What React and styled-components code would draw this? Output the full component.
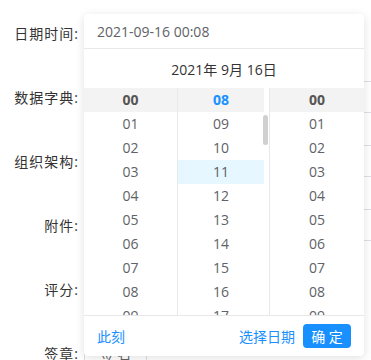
import React from "react";
import styled, { createGlobalStyle } from "styled-components";

const GlobalStyle = createGlobalStyle`
  html, body {
    margin: 0;
    padding: 0;
    background: #fff;
    overflow: hidden;
  }
  body {
    font-family: "Open Sans", "Noto Sans CJK SC", sans-serif;
    font-size: 14px;
    color: #606266;
  }
`;

const pad = (n) => String(n).padStart(2, "0");

// field rows behind the picker
const Page = styled.div`
  position: relative;
  width: 420px;
  height: 360px;
  padding-top: 17px;
  box-sizing: border-box;
`;

const Form = styled.div`
  display: flex;
  flex-direction: column;
  gap: 32px;
`;

const Row = styled.div`
  display: grid;
  grid-template-columns: 84px 1fr;
  height: 32px;
`;

const Label = styled.label`
  text-align: right;
  padding-right: 5px;
  line-height: 33px;
  color: #333;
  font-size: 14px;
  letter-spacing: 1px;
`;

const Field = styled.div`
  height: 32px;
  box-sizing: border-box;
  border: 1px solid #dcdfe6;
  border-radius: 4px;
  width: ${(p) => p.$width || "auto"};
`;

const SignButton = styled.button`
  width: 63px;
  height: 32px;
  border: 1px solid #dcdfe6;
  border-radius: 4px;
  background: #fff;
  color: #606266;
  font: inherit;
  font-size: 14px;
  padding: 0;
`;

// picker popup
const Popup = styled.div`
  position: absolute;
  left: 84px;
  top: 14px;
  width: 280px;
  background: #fff;
  border-radius: 4px;
  box-shadow: 0 2px 10px rgba(0, 0, 0, 0.12);
  display: flex;
  flex-direction: column;
`;

const InputLine = styled.div`
  height: 34px;
  line-height: 36px;
  padding-left: 13px;
  border-bottom: 1px solid #e8e8e8;
  color: #606266;
`;

const DateTitle = styled.div`
  height: 39px;
  line-height: 41px;
  text-align: center;
  color: #333;
`;

const Columns = styled.div`
  display: flex;
  height: 227px;
  overflow: hidden;
`;

const Column = styled.div`
  position: relative;
  box-sizing: border-box;
  flex: ${(p) => (p.$width ? `0 0 ${p.$width}px` : "1")};
  border-right: ${(p) => (p.$last ? "none" : "1px solid #e8e8e8")};
  padding-right: ${(p) => (p.$scroll ? "5px" : "0")};
  overflow: hidden;
`;

const Cell = styled.div`
  height: 24px;
  line-height: 24px;
  text-align: center;
  font-weight: ${(p) => (p.$selected ? 700 : 400)};
  color: ${(p) => (p.$active ? "#1890ff" : p.$selected ? "#555" : "#606266")};
  background: ${(p) =>
    p.$selected ? "#f3f3f3" : p.$hover ? "#e6f7ff" : "transparent"};
`;

const Thumb = styled.div`
  position: absolute;
  right: 1px;
  top: 27px;
  width: 5px;
  height: 30px;
  border-radius: 3px;
  background: #d0d0d0;
`;

const Footer = styled.div`
  height: 40px;
  border-top: 1px solid #e8e8e8;
  display: flex;
  align-items: center;
  padding: 0 13px;
  gap: 8px;
`;

const LinkText = styled.span`
  color: #1890ff;
  font-size: 14px;
  margin-right: ${(p) => (p.$push ? "auto" : "0")};
`;

const Confirm = styled.button`
  height: 24px;
  width: 48px;
  border: none;
  border-radius: 4px;
  background: #1890ff;
  color: #fff;
  font: inherit;
  font-size: 14px;
  padding: 0;
`;

const TimeColumn = ({ start, count, selected, active, hover, scroll, last, width }) => {
  const items = Array.from({ length: count }, (_, i) => start + i);
  return (
    <Column $scroll={scroll} $last={last} $width={width}>
      {items.map((n) => (
        <Cell
          key={n}
          $selected={n === selected}
          $active={active && n === selected}
          $hover={n === hover}
        >
          {pad(n)}
        </Cell>
      ))}
      {scroll && <Thumb />}
    </Column>
  );
};

const App = () => {
  return (
    <Page>
      <GlobalStyle />
      <Form>
        <Row>
          <Label>日期时间:</Label>
          <Field $width="220px" />
        </Row>
        <Row>
          <Label>数据字典:</Label>
          <Field />
        </Row>
        <Row>
          <Label>组织架构:</Label>
          <Field />
        </Row>
        <Row>
          <Label>附件:</Label>
          <Field />
        </Row>
        <Row>
          <Label>评分:</Label>
          <div />
        </Row>
        <Row>
          <Label>签章:</Label>
          <div>
            <SignButton>签 名</SignButton>
          </div>
        </Row>
      </Form>

      <Popup>
        <InputLine>2021-09-16 00:08</InputLine>
        <DateTitle>2021年 9月 16日</DateTitle>
        <Columns>
          <TimeColumn start={0} count={10} selected={0} width={94} />
          <TimeColumn start={8} count={10} selected={8} active hover={11} scroll width={92} />
          <TimeColumn start={0} count={10} selected={0} last />
        </Columns>
        <Footer>
          <LinkText $push>此刻</LinkText>
          <LinkText>选择日期</LinkText>
          <Confirm>确 定</Confirm>
        </Footer>
      </Popup>
    </Page>
  );
};

export default App;
